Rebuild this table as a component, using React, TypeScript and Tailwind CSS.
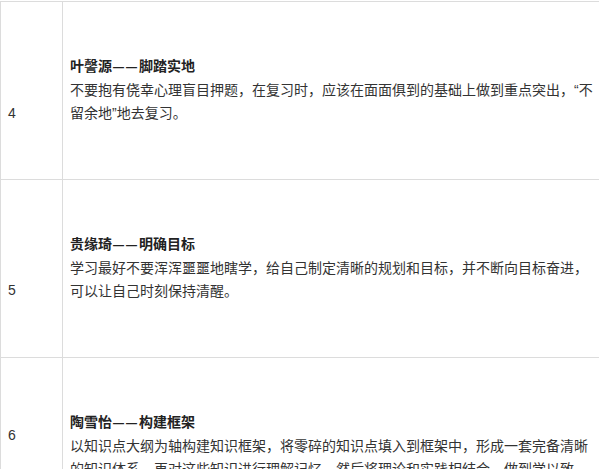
const rows = [
  {
    no: "4",
    numPad: "pt-[100px]",
    name: "叶謦源",
    topic: "脚踏实地",
    body: "不要抱有侥幸心理盲目押题，在复习时，应该在面面俱到的基础上做到重点突出，“不留余地”地去复习。",
  },
  {
    no: "5",
    numPad: "pt-[99px]",
    name: "贵缘琦",
    topic: "明确目标",
    body: "学习最好不要浑浑噩噩地瞎学，给自己制定清晰的规划和目标，并不断向目标奋进，可以让自己时刻保持清醒。",
  },
  {
    no: "6",
    numPad: "pt-[66px]",
    name: "陶雪怡",
    topic: "构建框架",
    body: "以知识点大纲为轴构建知识框架，将零碎的知识点填入到框架中，形成一套完备清晰的知识体系，再对这些知识进行理解记忆，然后将理论和实践相结合，做到学以致用。",
  },
];

export default function App() {
  return (
    <div className="w-[599px] h-[469px] overflow-hidden bg-white pt-px font-['Liberation_Sans','Noto_Sans_CJK_SC',sans-serif] text-[14px] leading-[23px] text-[#333]">
      <div className="w-[640px] border-t border-l border-[#dcdcdc]">
        {rows.map((r) => (
          <div key={r.no} className="flex border-b border-[#dcdcdc]">
            <div className={`w-[62px] shrink-0 border-r border-[#dcdcdc] pl-[7px] ${r.numPad}`}>
              {r.no}
            </div>
            <div className="pl-[7px] pt-[53px] pb-[54px]">
              <div className="w-[528px]">
                <p className="font-bold text-[#222]">
                  {r.name}
                  <span className="text-[11px] tracking-[2px] pl-[1px]">——</span>
                  {r.topic}
                </p>
                <p>{r.body}</p>
              </div>
            </div>
          </div>
        ))}
      </div>
    </div>
  );
}
